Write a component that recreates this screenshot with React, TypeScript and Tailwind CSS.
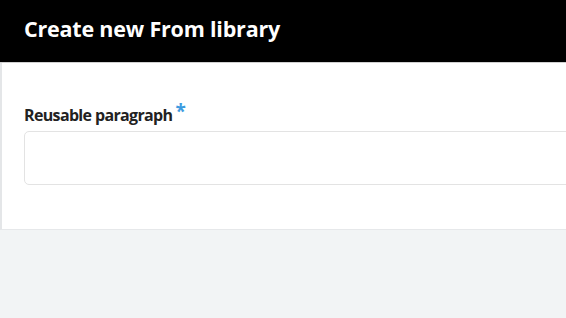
export default function App() {
  return (
    <div className="w-[566px] h-[318px] overflow-hidden bg-[#f2f4f5] font-['Open_Sans',sans-serif]">
      <div className="h-[63px] bg-black flex items-center pl-[24px] border-b border-[#d0d0d0]">
        <h1 className="text-white font-bold text-[21.5px] tracking-[-0.2px] pb-[4px]">Create new From library</h1>
      </div>
      <div className="bg-white h-[167px] border-l-2 border-[#e4e6e8] border-b border-b-[#e6e8ea] pl-[22px] pt-[40px]">
        <div className="flex items-start">
          <span className="text-[16px] font-bold text-[#222] leading-[24px] tracking-[-0.65px]">Reusable paragraph</span>
          <span className="text-[#3d9be0] text-[19px] font-bold leading-[16px] ml-[3px] mt-[0px]">*</span>
        </div>
        <div className="mt-[4px] h-[54px] border border-[#e3e3e3] rounded-[5px] bg-white w-[600px]"></div>
      </div>
    </div>
  );
}
